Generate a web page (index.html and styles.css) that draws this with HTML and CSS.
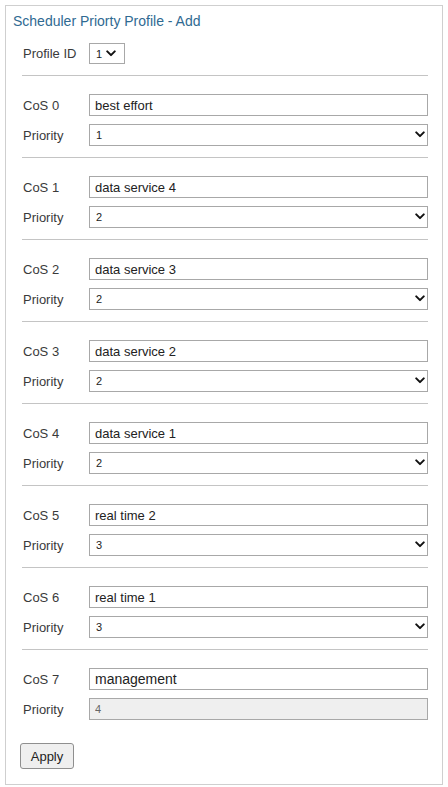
FILE: index.html
```html
<!DOCTYPE html>
<html lang="en">
<head>
  <meta charset="UTF-8" />
  <meta name="viewport" content="width=device-width, initial-scale=1.0" />
  <link rel="stylesheet" href="styles.css">
</head>
<body>
  <div class="panel">
    <h2 class="title">Scheduler Priorty Profile - Add</h2>

    <div class="content">
      <div class="profile-row">
        <label for="profile-id">Profile ID</label>
        <span class="select-wrap small">
          <select id="profile-id"><option>1</option><option>2</option></select>
          <svg class="chev" viewBox="0 0 12 8"><path d="M1.5 1.5 L6 6 L10.5 1.5" /></svg>
        </span>
      </div>

      <div class="cos-block">
        <label>CoS 0</label>
        <input type="text" value="best effort" />
        <label>Priority</label>
        <span class="select-wrap">
          <select><option selected>1</option><option>2</option><option>3</option><option>4</option></select>
          <svg class="chev" viewBox="0 0 12 8"><path d="M1.5 1.5 L6 6 L10.5 1.5" /></svg>
        </span>
      </div>

      <div class="cos-block">
        <label>CoS 1</label>
        <input type="text" value="data service 4" />
        <label>Priority</label>
        <span class="select-wrap">
          <select><option>1</option><option selected>2</option><option>3</option><option>4</option></select>
          <svg class="chev" viewBox="0 0 12 8"><path d="M1.5 1.5 L6 6 L10.5 1.5" /></svg>
        </span>
      </div>

      <div class="cos-block">
        <label>CoS 2</label>
        <input type="text" value="data service 3" />
        <label>Priority</label>
        <span class="select-wrap">
          <select><option>1</option><option selected>2</option><option>3</option><option>4</option></select>
          <svg class="chev" viewBox="0 0 12 8"><path d="M1.5 1.5 L6 6 L10.5 1.5" /></svg>
        </span>
      </div>

      <div class="cos-block">
        <label>CoS 3</label>
        <input type="text" value="data service 2" />
        <label>Priority</label>
        <span class="select-wrap">
          <select><option>1</option><option selected>2</option><option>3</option><option>4</option></select>
          <svg class="chev" viewBox="0 0 12 8"><path d="M1.5 1.5 L6 6 L10.5 1.5" /></svg>
        </span>
      </div>

      <div class="cos-block">
        <label>CoS 4</label>
        <input type="text" value="data service 1" />
        <label>Priority</label>
        <span class="select-wrap">
          <select><option>1</option><option selected>2</option><option>3</option><option>4</option></select>
          <svg class="chev" viewBox="0 0 12 8"><path d="M1.5 1.5 L6 6 L10.5 1.5" /></svg>
        </span>
      </div>

      <div class="cos-block">
        <label>CoS 5</label>
        <input type="text" value="real time 2" />
        <label>Priority</label>
        <span class="select-wrap">
          <select><option>1</option><option>2</option><option selected>3</option><option>4</option></select>
          <svg class="chev" viewBox="0 0 12 8"><path d="M1.5 1.5 L6 6 L10.5 1.5" /></svg>
        </span>
      </div>

      <div class="cos-block">
        <label>CoS 6</label>
        <input type="text" value="real time 1" />
        <label>Priority</label>
        <span class="select-wrap">
          <select><option>1</option><option>2</option><option selected>3</option><option>4</option></select>
          <svg class="chev" viewBox="0 0 12 8"><path d="M1.5 1.5 L6 6 L10.5 1.5" /></svg>
        </span>
      </div>

      <div class="cos-block">
        <label>CoS 7</label>
        <input type="text" class="big" value="management" />
        <label>Priority</label>
        <input type="text" class="locked" value="4" disabled />
      </div>

      <button class="apply">Apply</button>
    </div>
  </div>
</body>
</html>
```

FILE: styles.css
```css
html, body {
  margin: 0;
  padding: 0;
  background-color: #ffffff;
  font-family: "Liberation Sans", Arial, sans-serif;
  color: #3a3a3a;
}

.panel {
  margin: 5px;
  height: 780px;
  box-sizing: border-box;
  border: 1px solid #cfcfcf;
}

.title {
  margin: 7px 0 0 7px;
  font-size: 14px;
  line-height: 16px;
  font-weight: normal;
  color: #2f6a92;
}

.content {
  padding: 0 14px 0 16px;
}

.profile-row {
  display: grid;
  grid-template-columns: 67px 36px;
  align-items: center;
  margin-top: 14px;
  padding: 0 0 11px 0;
  border-bottom: 1px solid #c4c4c4;
}

.profile-row label {
  padding-left: 1px;
}

label {
  font-size: 13px;
}

.cos-block {
  display: grid;
  grid-template-columns: 67px 1fr;
  align-items: center;
  row-gap: 8px;
  padding: 18px 0 11px 0;
  border-bottom: 1px solid #c4c4c4;
}

.cos-block:last-of-type {
  border-bottom: none;
}

.cos-block label {
  padding-left: 1px;
}

input[type="text"], select {
  height: 22px;
  box-sizing: border-box;
  border: 1px solid #a8a8a8;
  border-radius: 0;
  background-color: #ffffff;
  font-family: "Liberation Sans", Arial, sans-serif;
  font-size: 13px;
  color: #222222;
  padding: 0 5px;
  margin: 0;
  width: 100%;
}

input.big {
  font-size: 14px;
}

input.locked {
  background-color: #efefef;
  color: #666666;
  font-size: 11px;
}

.select-wrap {
  position: relative;
  display: block;
}

select {
  appearance: none;
  -webkit-appearance: none;
  font-size: 11px;
  padding: 0 6px;
}

.select-wrap.small select {
  height: 21px;
}

.chev {
  position: absolute;
  right: 3px;
  top: 7px;
  width: 10px;
  height: 7px;
  pointer-events: none;
}

.select-wrap.small .chev {
  right: 9px;
  top: 7px;
}

.chev path {
  fill: none;
  stroke: #111111;
  stroke-width: 2.4;
  stroke-linecap: round;
  stroke-linejoin: round;
}

.apply {
  margin-top: 12px;
  margin-left: -2px;
  width: 54px;
  height: 26px;
  font-family: "Liberation Sans", Arial, sans-serif;
  font-size: 13px;
  color: #222222;
  background-color: #efefef;
  border: 1px solid #8f8f8f;
  border-radius: 3px;
  cursor: pointer;
}
```
